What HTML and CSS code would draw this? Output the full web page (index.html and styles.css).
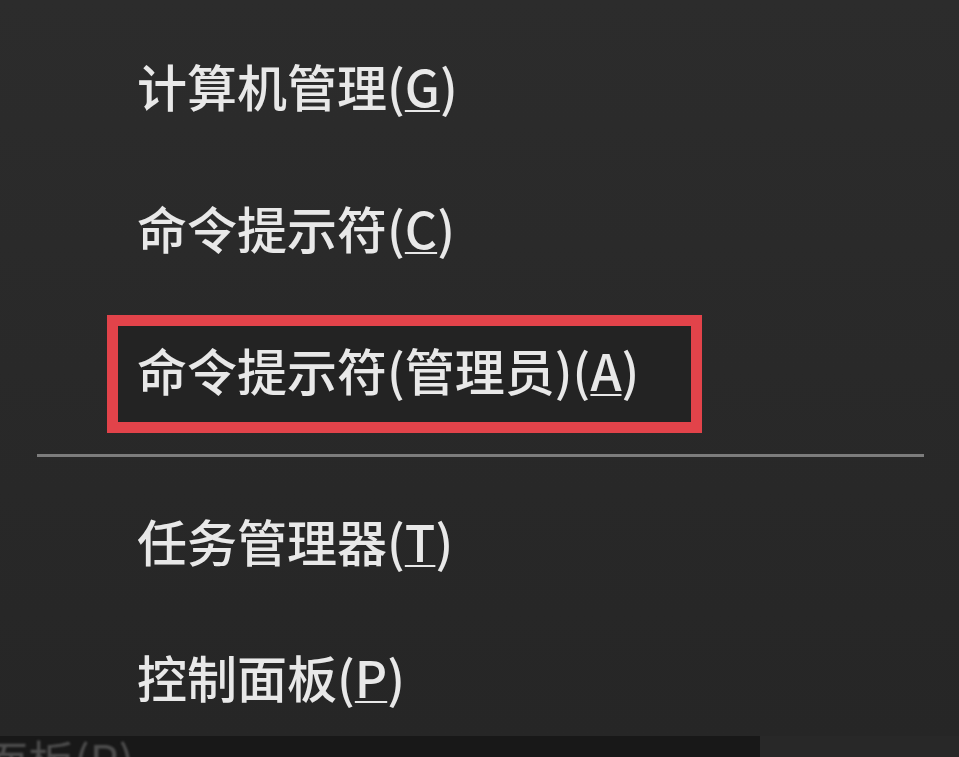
FILE: index.html
```html
<!DOCTYPE html>
<html lang="zh-CN">
<head>
<meta charset="utf-8">
<title>菜单</title>
<link rel="stylesheet" href="styles.css">
</head>
<body>
<div class="page">
  <ul class="menu">
    <li class="item first"><span class="label">计算机管理(<u>G</u>)</span></li>
    <li class="item"><span class="label">命令提示符(<u>C</u>)</span></li>
    <li class="item"><span class="label selected">命令提示符(管理员)(<u>A</u>)</span></li>
    <li class="sep"></li>
    <li class="item"><span class="label">任务管理器(<u>T</u>)</span></li>
    <li class="item last"><span class="label">控制面板(<u>P</u>)</span></li>
  </ul>
  <div class="strip">
    <div class="strip-left"><span class="ghost">面板(P)</span></div>
    <div class="strip-right"></div>
  </div>
</div>
</body>
</html>
```

FILE: styles.css
```css
html, body {
  margin: 0;
  padding: 0;
  height: 100%;
}
body {
  background: #2b2b2b;
  font-family: "Noto Sans CJK SC", "Noto Sans", sans-serif;
  overflow: hidden;
}
.page {
  display: flex;
  flex-direction: column;
  height: 757px;
}
.menu {
  list-style: none;
  margin: 0;
  padding: 19px 0 0 0;
  height: 736px;
  box-sizing: border-box;
  background: linear-gradient(#2c2c2c, #262626);
}
.item {
  display: flex;
  align-items: center;
  height: 142px;
  padding-left: 107px;
}
.item.last {
  height: 130px;
}
.label {
  display: inline-block;
  border: 11px solid transparent;
  padding: 12px 19px 22px 19px;
  font-size: 50px;
  font-weight: 500;
  line-height: 1;
  color: #e8e8e8;
  white-space: nowrap;
  filter: blur(0.4px);
}
.label u {
  text-decoration-thickness: 2px;
  text-underline-offset: 3px;
}
.label.selected {
  border-color: #e2434a;
  background: #232323;
  padding-right: 52px;
  padding-top: 18px;
  padding-bottom: 28px;
}
.sep {
  height: 3px;
  margin: 9px 35px 17px 37px;
  background: #7c7c7c;
}
.strip {
  display: flex;
  height: 21px;
}
.strip-left {
  width: 760px;
  background: #181818;
  overflow: hidden;
}
.ghost {
  display: block;
  margin-left: -18px;
  font-size: 46px;
  line-height: 46px;
  color: #4e4e4e;
  white-space: nowrap;
  filter: blur(1px);
}
.strip-right {
  flex: 1;
  background: #282828;
}
```
